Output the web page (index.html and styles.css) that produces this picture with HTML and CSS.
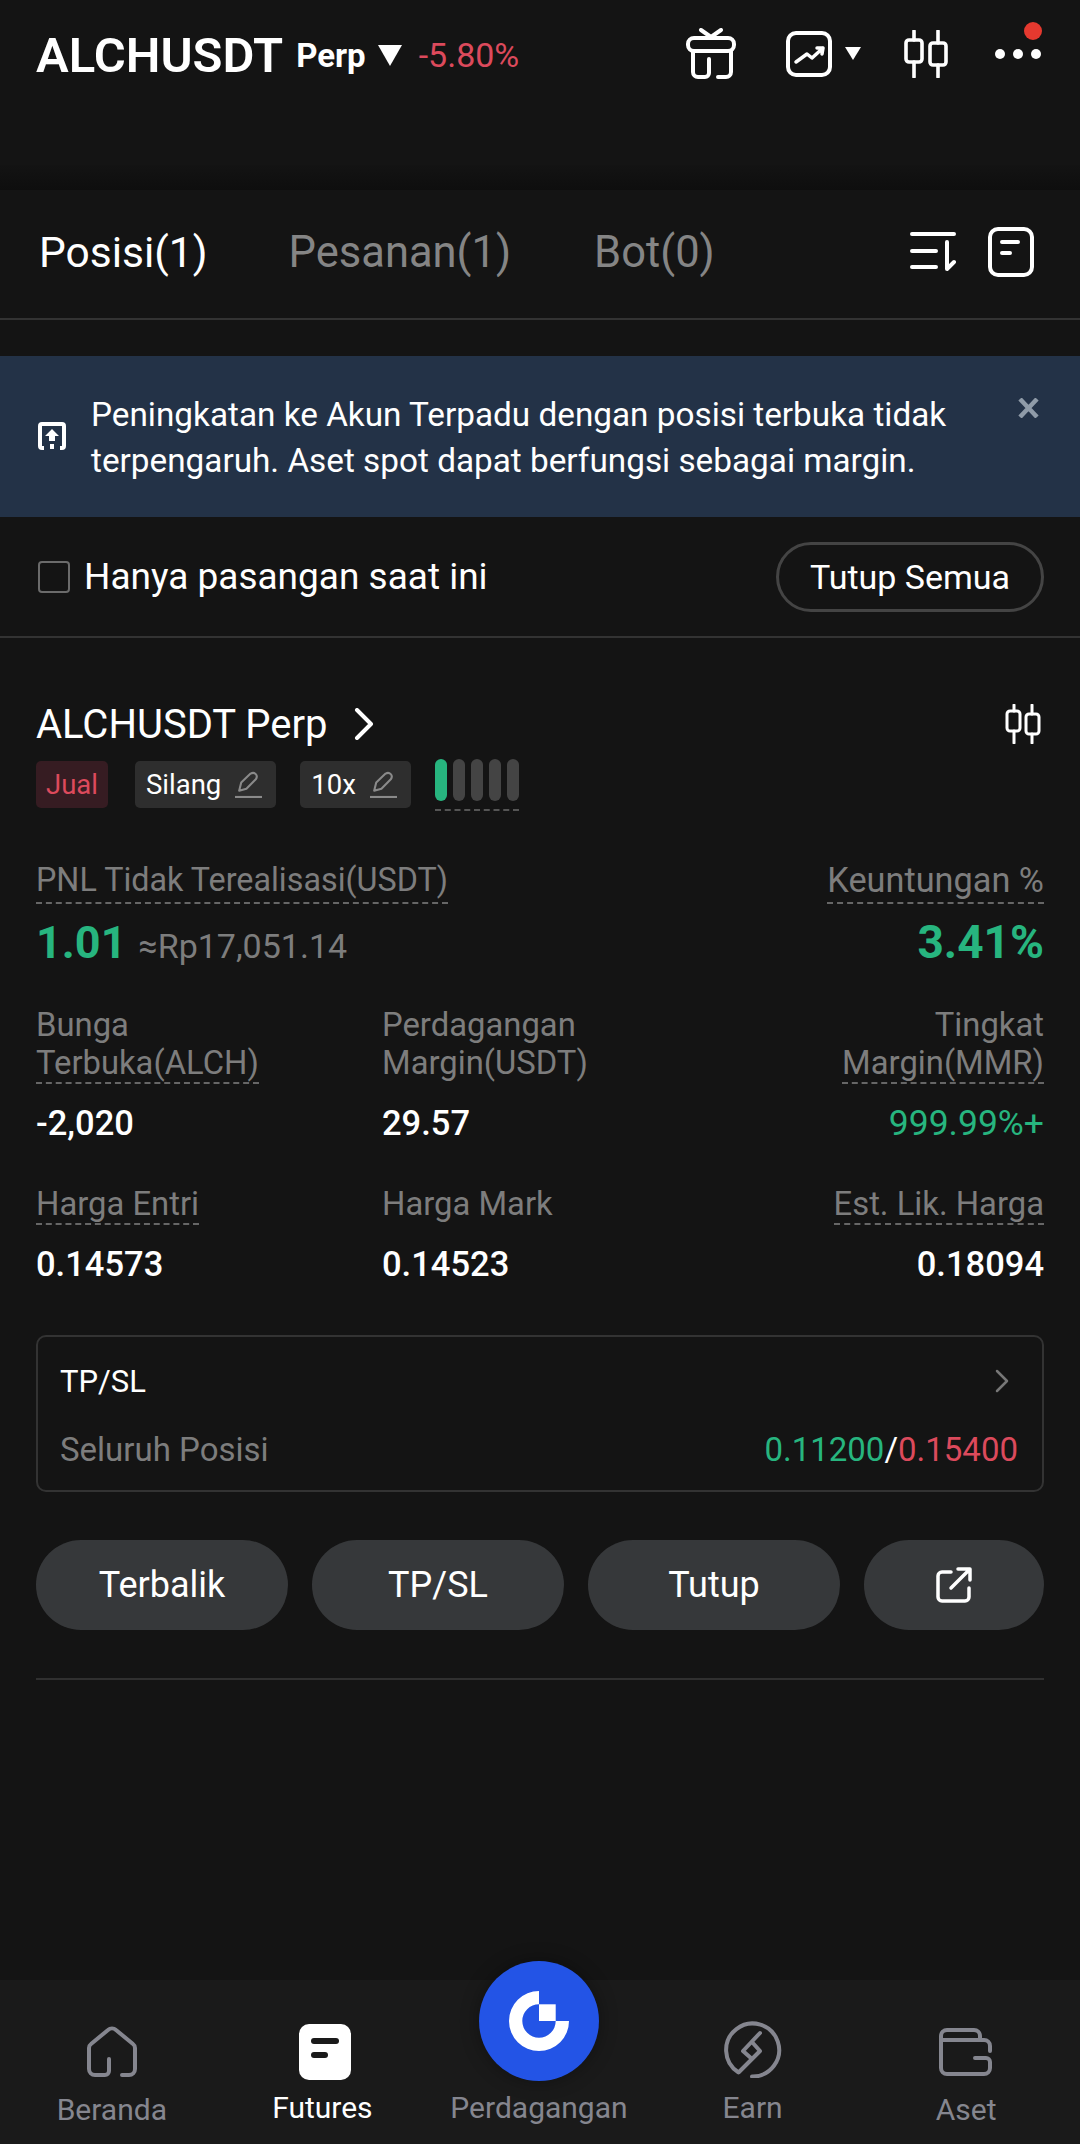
FILE: index.html
```html
<!DOCTYPE html>
<html lang="id">
<head>
  <meta charset="UTF-8" />
  <meta name="viewport" content="width=device-width, initial-scale=1.0" />
  <title>ALCHUSDT Perp</title>
  <link rel="stylesheet" href="styles.css">
</head>
<body>
  <div class="app">
    <header class="topbar">
      <span class="pair">ALCHUSDT</span>
      <span class="pair-type">Perp</span>
      <span class="caret caret-big"></span>
      <span class="change">-5.80%</span>
      <div class="top-icons">
        <svg class="ic-gift" viewBox="0 0 52 52" fill="none" stroke="#fff" stroke-width="4" stroke-linecap="round">
          <path d="M16 2 26 9 36 2" stroke-linejoin="round"/>
          <rect x="3" y="10" width="46" height="13" rx="6"/>
          <path d="M8 23V44a5 5 0 0 0 5 5H20a4 4 0 0 0 4-4V31"/>
          <path d="M46 23V44a5 5 0 0 1-5 5H33"/>
        </svg>
        <svg class="ic-chart" viewBox="0 0 46 46" fill="none" stroke="#fff" stroke-width="4" stroke-linecap="round" stroke-linejoin="round">
          <rect x="2" y="2" width="42" height="42" rx="8"/>
          <path d="M10 31 21 23 26 27 37 17M31 17H37L36 23" stroke-width="3.5"/>
        </svg>
        <span class="caret caret-small"></span>
        <svg class="ic-candle" viewBox="0 0 46 48" fill="none" stroke="#fff" stroke-width="3.6" stroke-linecap="round">
          <path d="M10 1V10M10 32V47M34 1V13M34 35V47"/>
          <rect x="2" y="10" width="16" height="22" rx="3"/>
          <rect x="26" y="13" width="16" height="22" rx="3"/>
        </svg>
        <div class="more">
          <i></i><i></i><i></i>
          <span class="dot-red"></span>
        </div>
      </div>
    </header>

    <div class="strip"></div>

    <nav class="tabs">
      <span class="tab active">Posisi(1)</span>
      <span class="tab">Pesanan(1)</span>
      <span class="tab">Bot(0)</span>
      <div class="tab-icons">
        <svg class="ic-sort" viewBox="0 0 46 40" fill="none" stroke="#fff" stroke-width="4" stroke-linecap="round" stroke-linejoin="round">
          <path d="M2 2H44M2 19H26M2 35H26M37 10V37L44 30"/>
        </svg>
        <svg class="ic-note" viewBox="0 0 46 50" fill="none" stroke="#fff" stroke-width="4" stroke-linecap="round">
          <rect x="2" y="2" width="42" height="46" rx="8"/>
          <path d="M14 15H30M14 26H22"/>
        </svg>
      </div>
    </nav>

    <div class="banner">
      <svg class="ic-upgrade" viewBox="0 0 28 28" fill="none">
        <path d="M6 26H4a2 2 0 0 1-2-2V4a2 2 0 0 1 2-2H24a2 2 0 0 1 2 2V24a2 2 0 0 1-2 2H22" stroke="#fff" stroke-width="4"/>
        <path d="M14 7 21 14H17V19H11V14H7Z" fill="#fff"/>
        <path d="M12 22H16V27H12Z" fill="#fff"/>
      </svg>
      <p class="banner-text">Peningkatan ke Akun Terpadu dengan posisi terbuka tidak terpengaruh. Aset spot dapat berfungsi sebagai margin.</p>
      <svg class="ic-close" viewBox="0 0 23 20" fill="none" stroke="#8f9ba8" stroke-width="4.5">
        <path d="M3 1 20 19M20 1 3 19"/>
      </svg>
    </div>

    <div class="filter">
      <span class="checkbox"></span>
      <span class="filter-label">Hanya pasangan saat ini</span>
      <span class="close-all">Tutup Semua</span>
    </div>

    <section class="position">
      <div class="pos-title">
        <span>ALCHUSDT Perp</span>
        <svg class="ic-chevron" viewBox="0 0 20 32" fill="none" stroke="#fff" stroke-width="4" stroke-linecap="round" stroke-linejoin="round">
          <path d="M3 2 17 16 3 30"/>
        </svg>
        <svg class="ic-candle-sm" viewBox="0 0 36 40" fill="none" stroke="#fff" stroke-width="3" stroke-linecap="round">
          <path d="M9 1V7M9 27V39M27 1V10M27 30V39"/>
          <rect x="2" y="7" width="13" height="20" rx="3"/>
          <rect x="21" y="10" width="13" height="20" rx="3"/>
        </svg>
      </div>

      <div class="tags">
        <span class="tag tag-sell">Jual</span>
        <span class="tag">Silang
          <svg class="ic-pencil" viewBox="0 0 26 26" fill="none" stroke="#8a8a8a" stroke-width="2">
            <path d="M4 19 6 11 15 2.500Q18 1 20 3T20 8L11 17Z" stroke-linejoin="round"/>
            <path d="M0 25H26"/>
          </svg>
        </span>
        <span class="tag">10x
          <svg class="ic-pencil" viewBox="0 0 26 26" fill="none" stroke="#8a8a8a" stroke-width="2">
            <path d="M4 19 6 11 15 2.500Q18 1 20 3T20 8L11 17Z" stroke-linejoin="round"/>
            <path d="M0 25H26"/>
          </svg>
        </span>
        <div class="risk">
          <i class="on"></i><i></i><i></i><i></i><i></i>
        </div>
      </div>

      <div class="pnl-labels">
        <span class="dashed">PNL Tidak Terealisasi(USDT)</span>
        <span class="dashed pct-label">Keuntungan %</span>
      </div>
      <div class="pnl-values">
        <span class="pnl-main">1.01</span>
        <span class="pnl-idr">≈Rp17,051.14</span>
        <span class="pnl-main pnl-pct">3.41%</span>
      </div>

      <div class="stats stats-first">
        <div class="stat-label"><span class="dashed">Bunga<br>Terbuka(ALCH)</span></div>
        <div class="stat-label">Perdagangan<br>Margin(USDT)</div>
        <div class="stat-label right"><span class="dashed">Tingkat<br>Margin(MMR)</span></div>
        <div class="stat-value">-2,020</div>
        <div class="stat-value">29.57</div>
        <div class="stat-value right green">999.99%+</div>
      </div>

      <div class="stats stats-second">
        <div class="stat-label"><span class="dashed">Harga Entri</span></div>
        <div class="stat-label">Harga Mark</div>
        <div class="stat-label right"><span class="dashed">Est. Lik. Harga</span></div>
        <div class="stat-value">0.14573</div>
        <div class="stat-value">0.14523</div>
        <div class="stat-value right">0.18094</div>
      </div>

      <div class="tpsl">
        <div class="tpsl-row">
          <span class="tpsl-title">TP/SL</span>
          <svg class="ic-chevron-sm" viewBox="0 0 14 24" fill="none" stroke="#777" stroke-width="2.500" stroke-linecap="round" stroke-linejoin="round">
            <path d="M2 2 12 12 2 22"/>
          </svg>
        </div>
        <div class="tpsl-row tpsl-row-2">
          <span class="tpsl-sub">Seluruh Posisi</span>
          <span class="tpsl-prices"><b class="green">0.11200</b>/<b class="red">0.15400</b></span>
        </div>
      </div>

      <div class="actions">
        <button class="btn">Terbalik</button>
        <button class="btn">TP/SL</button>
        <button class="btn">Tutup</button>
        <button class="btn btn-share">
          <svg class="ic-share" viewBox="0 0 36 36" fill="none" stroke="#fff" stroke-width="3.500" stroke-linecap="round" stroke-linejoin="round">
            <path d="M15 5H6a4 4 0 0 0-4 4V30a4 4 0 0 0 4 4H29a4 4 0 0 0 4-4V21"/>
            <path d="M15 21 33 3M22 2H34V13"/>
          </svg>
        </button>
      </div>
      <div class="divider"></div>
    </section>

    <div class="spacer"></div>

    <footer class="bottom-nav">
      <div class="nav-item">
        <svg class="ic-home" viewBox="0 0 52 52" fill="none" stroke="#85868f" stroke-width="4" stroke-linecap="round" stroke-linejoin="round">
          <path d="M23 33V45a4 4 0 0 1-4 4H9a6 6 0 0 1-6-6V22a5 5 0 0 1 2-4L22 4a6 6 0 0 1 8 0L47 18a5 5 0 0 1 2 4V43a6 6 0 0 1-6 6H36"/>
        </svg>
        <span>Beranda</span>
      </div>
      <div class="nav-item raised active">
        <svg class="ic-futures" viewBox="0 0 52 56">
          <rect width="52" height="56" rx="10" fill="#fff"/>
          <rect x="12" y="14" width="28" height="6" rx="3" fill="#1a1a1a"/>
          <rect x="12" y="28" width="17" height="6" rx="3" fill="#1a1a1a"/>
        </svg>
        <span>Futures</span>
      </div>
      <div class="nav-item raised">
        <span>Perdagangan</span>
      </div>
      <div class="nav-item raised">
        <svg class="ic-earn" viewBox="0 0 58 58" fill="none" stroke="#85868f" stroke-width="4" stroke-linecap="round" stroke-linejoin="round">
          <path d="M14.300 52.300A26.500 26.500 0 1 1 28 56.500"/>
          <path d="M36 13 19 31 28 39M28 22 36 31 15 52"/>
        </svg>
        <span>Earn</span>
      </div>
      <div class="nav-item">
        <svg class="ic-wallet" viewBox="0 0 56 52" fill="none" stroke="#85868f" stroke-width="4" stroke-linecap="round" stroke-linejoin="round">
          <path d="M3 14H46a6 6 0 0 1 6 6V25"/>
          <path d="M3 14V10a6 6 0 0 1 6-6H36a6 6 0 0 1 6 6V14"/>
          <path d="M3 14V42a6 6 0 0 0 6 6H46a6 6 0 0 0 6-6V36a4 4 0 0 0-4-4H37"/>
        </svg>
        <span>Aset</span>
      </div>
      <div class="trade-btn">
        <svg class="ic-logo" viewBox="0 0 60 60">
          <path d="M30 0A30 30 0 1 0 60 30H46.700A16.700 16.700 0 1 1 30 13.300Z" fill="#fff"/>
          <rect x="30" y="13.300" width="16.700" height="16.700" fill="#fff"/>
        </svg>
      </div>
    </footer>
  </div>
</body>
</html>
```

FILE: styles.css
```css
* {
  box-sizing: border-box;
}
body {
  margin: 0;
  background: #141414;
  color: #fff;
  font-family: 'Roboto', 'Liberation Sans', sans-serif;
}
.app {
  display: flex;
  flex-direction: column;
  width: 1080px;
  height: 2144px;
  overflow: hidden;
}
svg {
  display: block;
  flex: none;
}

/* top bar */
.topbar {
  display: flex;
  align-items: center;
  height: 165px;
  padding: 0 36px 55px;
}
.pair {
  font-size: 49px;
  font-weight: 600;
}
.pair-type {
  margin-left: 13px;
  font-size: 33px;
  font-weight: 700;
}
.caret {
  width: 0;
  height: 0;
  border-style: solid;
  border-color: #fff transparent transparent;
}
.caret-big {
  margin-left: 12px;
  border-width: 21px 12px 0;
}
.caret-small {
  margin-left: 13px;
  border-width: 13px 8px 0;
}
.change {
  margin-left: 17px;
  font-size: 34px;
  color: #dc4a5c;
}
.top-icons {
  display: flex;
  align-items: center;
  margin-left: auto;
  margin-right: 3px;
  margin-bottom: 3px;
}
.ic-gift {
  width: 52px;
  height: 52px;
}
.ic-chart {
  width: 46px;
  height: 46px;
  margin-left: 49px;
}
.ic-candle {
  width: 46px;
  height: 48px;
  margin-left: 43px;
}
.more {
  position: relative;
  display: flex;
  gap: 8px;
  margin-left: 45px;
}
.more i {
  width: 10px;
  height: 10px;
  border-radius: 50%;
  background: #fff;
}
.dot-red {
  position: absolute;
  top: -27px;
  right: -1px;
  width: 18px;
  height: 18px;
  border-radius: 50%;
  background: #e5392f;
}
.strip {
  height: 25px;
  background: linear-gradient(#131313, #0e0e0e);
}

/* tabs */
.tabs {
  display: flex;
  align-items: center;
  height: 130px;
  padding: 0 46px 4px 39px;
  border-bottom: 2px solid #333;
}
.tab {
  margin-right: 83px;
  font-size: 43.500px;
  color: #858585;
}
.tab.active {
  margin-right: 81px;
  font-size: 42.500px;
  color: #fff;
}
.tab-icons {
  display: flex;
  align-items: center;
  gap: 32px;
  margin-left: auto;
}
.ic-sort {
  width: 46px;
  height: 40px;
}
.ic-note {
  width: 46px;
  height: 50px;
}

/* banner */
.banner {
  display: flex;
  align-items: flex-start;
  height: 161px;
  margin-top: 36px;
  padding: 36px 40px 0 38px;
  background: #233247;
}
.ic-upgrade {
  width: 28px;
  height: 28px;
  margin-top: 30px;
}
.banner-text {
  width: 890px;
  margin: 0 0 0 25px;
  font-size: 33.300px;
  line-height: 46px;
}
.ic-close {
  width: 23px;
  height: 20px;
  margin: 6px 0 0 auto;
}

/* filter row */
.filter {
  display: flex;
  align-items: center;
  height: 121px;
  padding: 0 36px 0 38px;
  border-bottom: 2px solid #333;
}
.checkbox {
  width: 32px;
  height: 32px;
  border: 2px solid #6b6b6b;
  border-radius: 4px;
}
.filter-label {
  margin-left: 14px;
  font-size: 37px;
}
.close-all {
  margin-left: auto;
  width: 268px;
  height: 70px;
  border: 3px solid #444;
  border-radius: 35px;
  font-size: 34px;
  line-height: 64px;
  text-align: center;
}

/* position card */
.position {
  padding: 61px 36px 0;
}
.pos-title {
  display: flex;
  align-items: center;
  height: 50px;
  font-size: 40px;
  font-weight: 400;
}
.ic-chevron {
  width: 20px;
  height: 32px;
  margin-left: 26px;
}
.ic-candle-sm {
  width: 36px;
  height: 40px;
  margin-left: auto;
  margin-right: 3px;
}
.tags {
  display: flex;
  align-items: flex-start;
  height: 52px;
  margin-top: 10px;
}
.tag {
  display: flex;
  align-items: center;
  gap: 14px;
  height: 47px;
  margin-top: 2px;
  margin-right: 24px;
  padding: 0 14px 0 11px;
  border-radius: 5px;
  background: #2e2e2e;
  font-size: 27.500px;
}
.tag-sell {
  margin-right: 27px;
  padding: 0 10px;
  background: #361c22;
  color: #dc4a5c;
}
.ic-pencil {
  width: 27px;
  height: 27px;
}
.risk {
  display: flex;
  gap: 6px;
  height: 52px;
  padding-bottom: 6px;
  border-bottom: 2px dashed #555;
}
.risk i {
  width: 12px;
  height: 42px;
  border-radius: 6px;
  background: #444;
}
.risk i.on {
  background: #27b57f;
}
.dashed {
  display: inline-block;
  border-bottom: 2px dashed #666;
}
.pnl-labels {
  display: flex;
  justify-content: space-between;
  margin-top: 47px;
  font-size: 32.300px;
  line-height: 44px;
  color: #7d7d7d;
}
.pct-label {
  font-size: 34.300px;
}
.pnl-values {
  display: flex;
  align-items: baseline;
  margin-top: 13px;
  line-height: 50px;
}
.pnl-main {
  font-size: 45px;
  font-weight: 700;
  color: #27b57f;
}
.pnl-idr {
  margin-left: 12px;
  font-size: 34px;
  color: #7d7d7d;
}
.pnl-pct {
  margin-left: auto;
  font-size: 46px;
}
.stats {
  display: grid;
  grid-template-columns: 346px 1fr auto;
}
.stats-first {
  margin-top: 35px;
  row-gap: 19px;
}
.stats-second {
  margin-top: 42px;
  row-gap: 19px;
}
.stat-label {
  font-size: 32.800px;
  line-height: 38px;
  color: #7d7d7d;
}
.stat-value {
  font-size: 34.500px;
  font-weight: 500;
  line-height: 40px;
}
.right {
  text-align: right;
}
.green {
  color: #27b57f;
}
.red {
  color: #dc4a5c;
}
.stat-value.green {
  font-weight: 400;
  font-size: 35.500px;
}

/* tp/sl box */
.tpsl {
  height: 157px;
  margin-top: 51px;
  padding: 22px 24px 0 22px;
  border: 2px solid #333;
  border-radius: 10px;
}
.tpsl-row {
  display: flex;
  align-items: center;
  justify-content: space-between;
  height: 44px;
}
.tpsl-row-2 {
  margin-top: 24px;
}
.tpsl-title {
  font-size: 31px;
}
.ic-chevron-sm {
  width: 14px;
  height: 24px;
  margin-right: 9px;
}
.tpsl-sub {
  font-size: 33px;
  color: #7d7d7d;
}
.tpsl-prices {
  font-size: 33px;
}
.tpsl-prices b {
  font-weight: 400;
}

/* buttons */
.actions {
  display: flex;
  gap: 24px;
  margin-top: 48px;
}
.btn {
  flex: 0 0 252px;
  height: 90px;
  border: 0;
  border-radius: 45px;
  background: #36383a;
  color: #fff;
  font-family: inherit;
  font-size: 36px;
}
.btn-share {
  display: flex;
  flex: 0 0 180px;
  align-items: center;
  justify-content: center;
}
.ic-share {
  width: 36px;
  height: 36px;
}
.divider {
  height: 2px;
  margin-top: 48px;
  background: #303030;
}
.spacer {
  flex: 1;
}

/* bottom nav */
.bottom-nav {
  position: relative;
  display: flex;
  height: 164px;
  padding: 0 7px 0 5px;
  background: #1a1a1a;
}
.nav-item {
  flex: 1;
  display: flex;
  flex-direction: column;
  align-items: center;
  justify-content: flex-end;
  gap: 14px;
  padding-bottom: 16px;
  font-size: 30px;
  line-height: 36px;
  color: #85868f;
}
.nav-item.raised {
  gap: 12px;
  padding-bottom: 18px;
}
.nav-item.active {
  gap: 10px;
  color: #fff;
}
.nav-item.active span {
  margin-right: 6px;
}
.ic-home {
  width: 52px;
  height: 52px;
}
.ic-futures {
  width: 52px;
  height: 56px;
}
.ic-earn {
  width: 58px;
  height: 58px;
}
.ic-wallet {
  width: 56px;
  height: 52px;
}
.trade-btn {
  position: absolute;
  left: 479px;
  top: -19px;
  display: flex;
  align-items: center;
  justify-content: center;
  width: 120px;
  height: 120px;
  border-radius: 50%;
  background: #2354e6;
  box-shadow: 0 0 18px rgba(0, 0, 0, 0.35);
}
.ic-logo {
  width: 60px;
  height: 60px;
}
```
